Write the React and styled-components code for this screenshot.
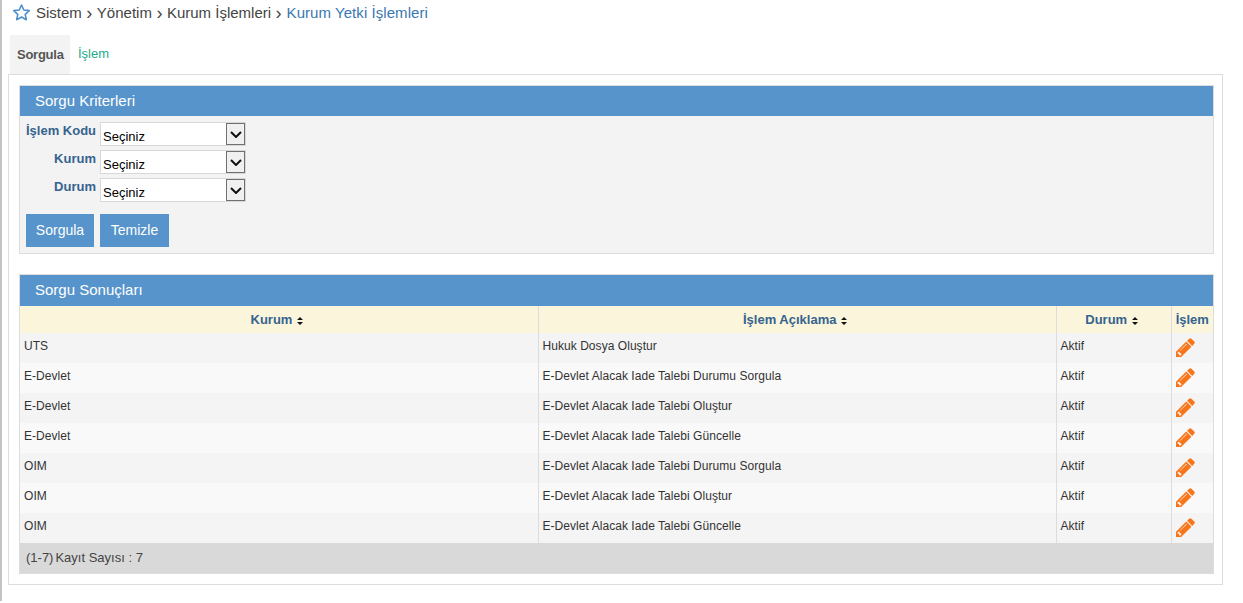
import React from "react";
import styled, { createGlobalStyle } from "styled-components";

const Global = createGlobalStyle`
  html, body { margin: 0; padding: 0; background: #fff; }
  body { font-family: "Liberation Sans", Arial, sans-serif; color: #333; }
`;
const Page = styled.div`
  height: 601px; border-left: 2px solid #c4c4c4; padding: 0 0 0 6px; width: 1235px;
`;
const Crumbs = styled.div`
  display: flex; align-items: center; height: 25px; padding-left: 4px; font-size: 15px; color: #444;
`;
const StarIcon = styled.svg`
  width: 19px; height: 19px; margin-right: 5px; flex: none;
`;
const Sep = styled.span`
  margin: 0 4.5px; font-size: 18px; line-height: 1; color: #444;
`;
const Current = styled.span`
  color: #3a78b0; letter-spacing: 0.06px; margin-left: 0.5px;
`;
const Tabs = styled.div`
  display: flex; align-items: stretch; height: 39px; margin: 10px 0 0 2px;
`;
const Tab = styled.div`
  box-sizing: border-box; width: ${p => p.$active ? "60px" : "auto"}; padding-left: ${p => p.$active ? "7px" : "8px"};
  padding-top: ${p => p.$active ? "12px" : "11px"};
  background: ${p => p.$active ? "#f3f3f3" : "transparent"};
  color: ${p => p.$active ? "#555" : "#1fa98a"};
  font-weight: ${p => p.$active ? "bold" : "normal"};
  font-size: 13px;
  letter-spacing: ${p => p.$active ? "-0.25px" : "0"};
`;
const Panel = styled.div`
  box-sizing: border-box; width: 1215px; height: 511px; border: 1px solid #ddd; padding: 10px;
  display: flex; flex-direction: column; gap: 20px;
`;
const Section = styled.section`
  box-sizing: border-box; width: 1195px; border: 1px solid #ddd; background: #f3f3f3;
`;
const SectionTitle = styled.h2`
  margin: 0; height: ${p => p.$h}px; background: #5694cb; color: #fff; font-weight: normal; font-size: 15px;
  line-height: 30px; padding-left: 15px;
`;
const Form = styled.div`
  padding: 6px 5px 6px 6px; display: flex; flex-direction: column; gap: 4px;
`;
const FormRow = styled.div`
  display: flex; gap: 4px; height: 24px;
`;
const Label = styled.label`
  width: 70px; flex: none; white-space: nowrap; text-align: right; font-size: 13px; font-weight: bold; color: #35638f; line-height: 18px;
`;
const SelectBox = styled.div`
  position: relative; width: 146px; height: 24px;
`;
const Select = styled.select`
  appearance: none; box-sizing: border-box; width: 146px; height: 24px; border: 1px solid #d8d8d8;
  background: #fff; font: 13px "Liberation Sans", Arial, sans-serif; color: #000; padding: 5px 0 0 2px; border-radius: 0; margin: 0;
`;
const Arrow = styled.span`
  position: absolute; right: 1px; top: 1px; box-sizing: border-box; width: 19px; height: 22px;
  background: #f0f0f0; border: 1px solid #707070; display: flex; align-items: center; justify-content: center;
`;
const Buttons = styled.div`
  display: flex; gap: 6px; margin-top: 8px;
`;
const Button = styled.button`
  height: 33px; padding: 0 0 2px; width: ${p => p.$w}px; border: 0; background: #5694cb; color: #fff;
  font: 14px "Liberation Sans", Arial, sans-serif;
`;
const Table = styled.table`
  width: 1193px; border-collapse: collapse; table-layout: fixed; font-size: 12px; letter-spacing: 0.05px;
`;
const Th = styled.th`
  height: 27px; padding: 0 ${p => p.$last ? "0" : "4px"} 0 0; background: #fbf5dc; color: #35638f; font-size: 13px; font-weight: bold; letter-spacing: 0;
  border-right: ${p => p.$last ? "0" : "1px solid #ddd"}; text-align: center;
`;
const Row = styled.tr`
  background: ${p => p.$odd ? "#f4f4f4" : "#f9f9f9"};
`;
const Td = styled.td`
  height: 30px; padding: 0 0 4px 4px; box-sizing: border-box; color: #333;
  border-right: ${p => p.$last ? "0" : "1px solid #ddd"};
`;
const ActionCell = styled.td`
  height: 30px; padding: 0 0 2px 4px; box-sizing: border-box; line-height: 0;
`;
const SortIcon = styled.svg`
  width: 6px; height: 8px; margin-left: 1px; vertical-align: -1px;
`;
const Footer = styled.div`
  height: 30px; background: #d9d9d9; font-size: 13px; color: #444; line-height: 29px; padding-left: 6px;
  display: flex; gap: 2px;
`;

const Sort = () => (
  <SortIcon viewBox="0 0 6 8"><path d="M3 0 6 3H0zM3 8 0 5h6z" fill="#111" /></SortIcon>
);
const Pencil = () => (
  <svg width="19" height="19" viewBox="128 128 1536 1536" fill="#f9751a">
    <path d="M491 1536l91-91-235-235-91 91v107h128v128h107zm523-928q0-22-22-22-10 0-17 7l-542 542q-7 7-7 17 0 22 22 22 10 0 17-7l542-542q7-7 7-17zm-54-192l416 416-832 832h-416v-416zm683 96q0 53-37 90l-166 166-416-416 166-165q36-38 90-38 53 0 91 38l235 234q37 39 37 91z" />
  </svg>
);

const rows = [
  ["UTS", "Hukuk Dosya Oluştur"],
  ["E-Devlet", "E-Devlet Alacak Iade Talebi Durumu Sorgula"],
  ["E-Devlet", "E-Devlet Alacak Iade Talebi Oluştur"],
  ["E-Devlet", "E-Devlet Alacak Iade Talebi Güncelle"],
  ["OIM", "E-Devlet Alacak Iade Talebi Durumu Sorgula"],
  ["OIM", "E-Devlet Alacak Iade Talebi Oluştur"],
  ["OIM", "E-Devlet Alacak Iade Talebi Güncelle"],
];
const fields = ["İşlem Kodu", "Kurum", "Durum"];

export default function App() {
  return (
    <Page>
      <Global />
      <Crumbs>
        <StarIcon viewBox="0 0 24 24" fill="none" stroke="#4d8fc9" strokeWidth="2" strokeLinejoin="round">
          <path d="M12 2.5l2.9 6.3 6.9.8-5.1 4.7 1.4 6.8-6.1-3.4-6.1 3.4 1.4-6.8-5.1-4.7 6.9-.8z" />
        </StarIcon>
        Sistem<Sep>›</Sep>Yönetim<Sep>›</Sep>Kurum İşlemleri<Sep>›</Sep><Current>Kurum Yetki İşlemleri</Current>
      </Crumbs>
      <Tabs>
        <Tab $active>Sorgula</Tab>
        <Tab>İşlem</Tab>
      </Tabs>
      <Panel>
        <Section>
          <SectionTitle $h={30}>Sorgu Kriterleri</SectionTitle>
          <Form>
            {fields.map(f => (
              <FormRow key={f}>
                <Label>{f}</Label>
                <SelectBox>
                  <Select defaultValue="s"><option value="s">Seçiniz</option></Select>
                  <Arrow>
                    <svg width="12" height="7" viewBox="0 0 12 7" fill="none" stroke="#111" strokeWidth="2"><path d="M1 1l5 5 5-5" /></svg>
                  </Arrow>
                </SelectBox>
              </FormRow>
            ))}
            <Buttons>
              <Button $w={68}>Sorgula</Button>
              <Button $w={69}>Temizle</Button>
            </Buttons>
          </Form>
        </Section>
        <Section>
          <SectionTitle $h={31}>Sorgu Sonuçları</SectionTitle>
          <Table>
            <colgroup>
              <col style={{ width: 518 }} />
              <col style={{ width: 518 }} />
              <col style={{ width: 115 }} />
              <col style={{ width: 42 }} />
            </colgroup>
            <thead>
              <tr>
                <Th>Kurum <Sort /></Th>
                <Th>İşlem Açıklama <Sort /></Th>
                <Th>Durum <Sort /></Th>
                <Th $last>İşlem</Th>
              </tr>
            </thead>
            <tbody>
              {rows.map((r, i) => (
                <Row key={i} $odd={i % 2 === 0}>
                  <Td>{r[0]}</Td>
                  <Td>{r[1]}</Td>
                  <Td>Aktif</Td>
                  <ActionCell><Pencil /></ActionCell>
                </Row>
              ))}
            </tbody>
          </Table>
          <Footer><span>(1-7)</span><span>Kayıt Sayısı : 7</span></Footer>
        </Section>
      </Panel>
    </Page>
  );
}
